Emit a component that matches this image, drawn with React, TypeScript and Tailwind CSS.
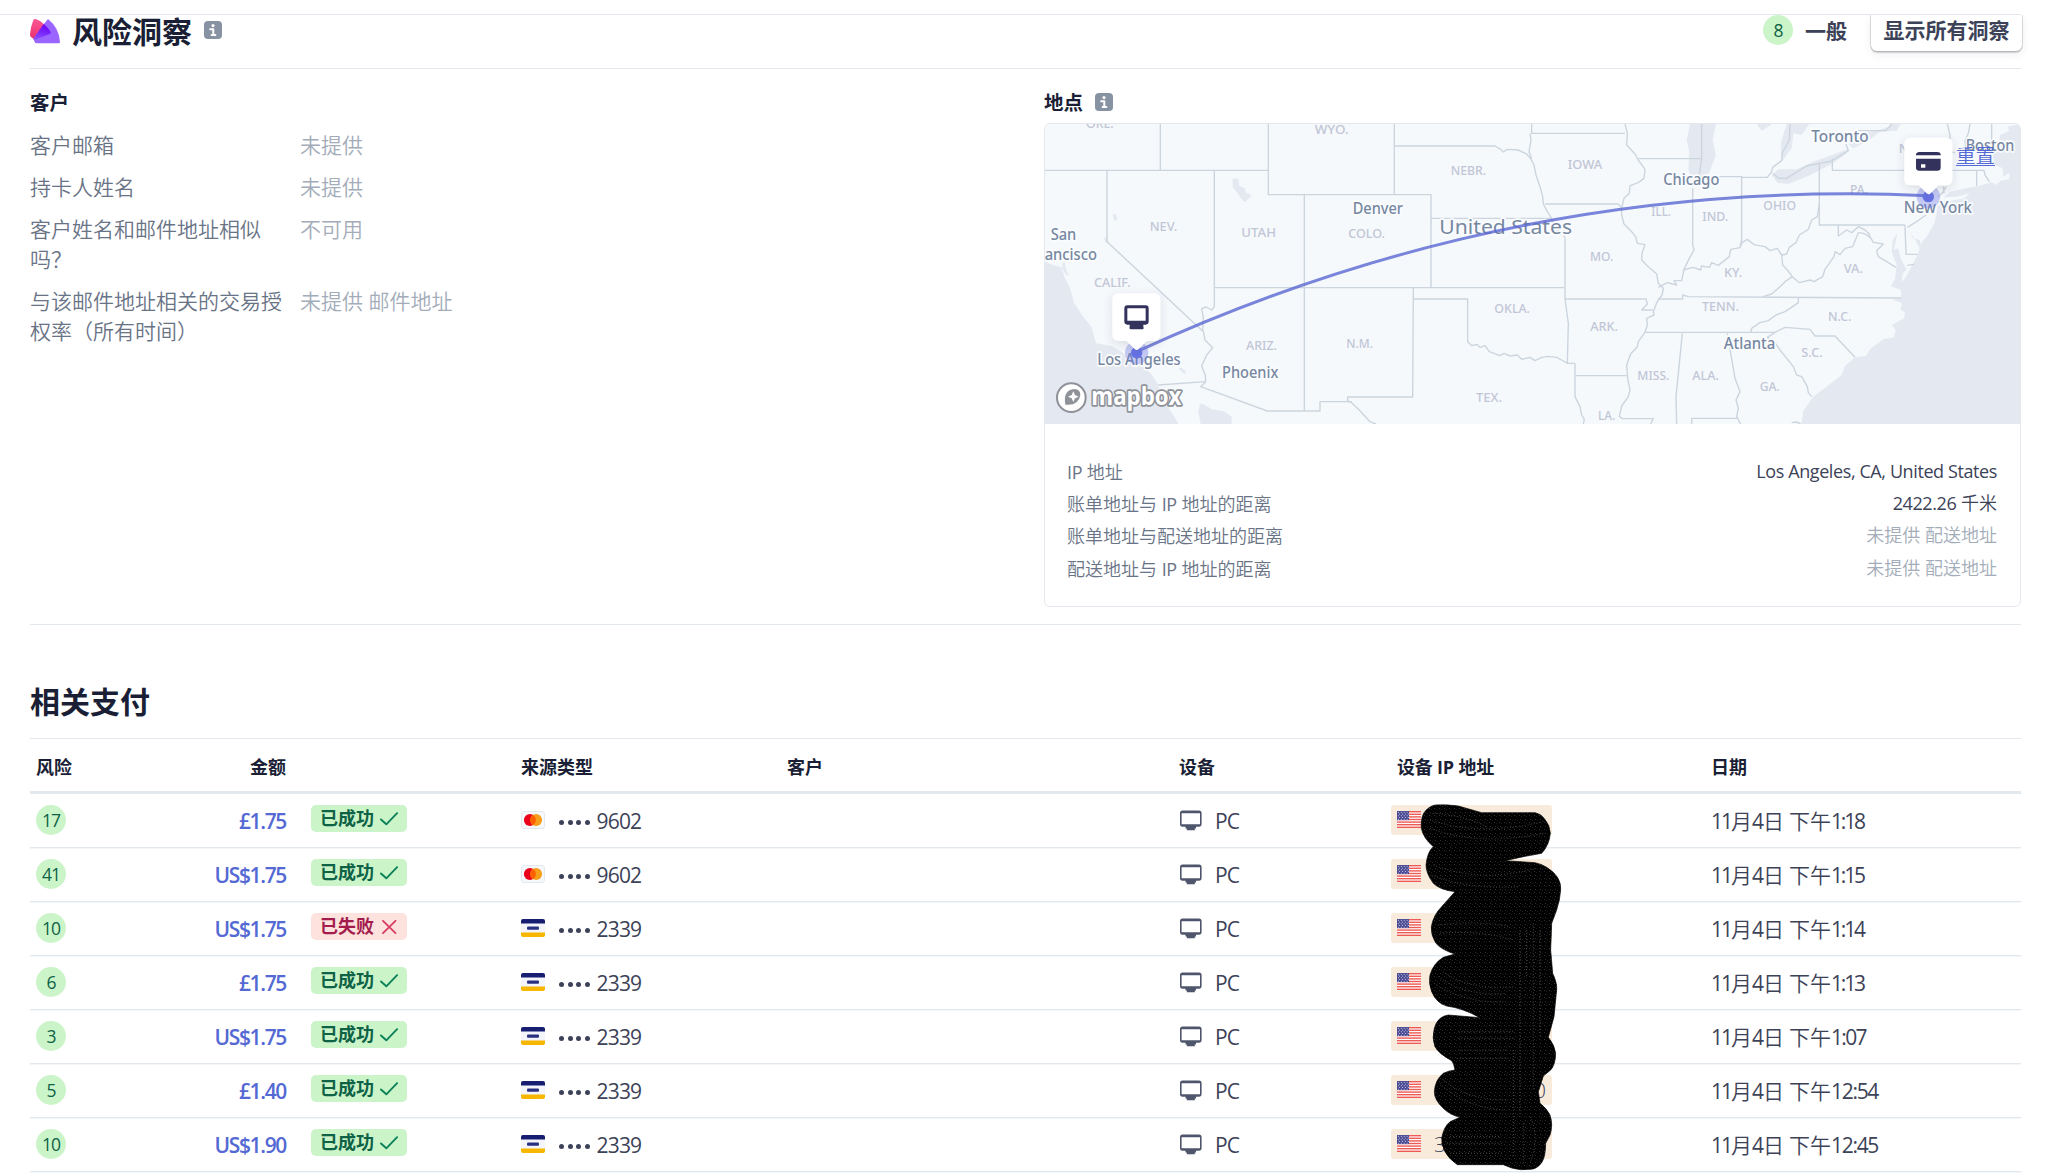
import React from 'react';

type Payment = {
  risk: number;
  amount: string;
  ok: boolean;
  brand: 'mc' | 'visa';
  last4: string;
  ip: string;
  time: string;
};

const payments: Payment[] = [
  { risk: 17, amount: '£1.75', ok: true, brand: 'mc', last4: '9602', ip: '', time: '1:18' },
  { risk: 41, amount: 'US$1.75', ok: true, brand: 'mc', last4: '9602', ip: '', time: '1:15' },
  { risk: 10, amount: 'US$1.75', ok: false, brand: 'visa', last4: '2339', ip: '', time: '1:14' },
  { risk: 6, amount: '£1.75', ok: true, brand: 'visa', last4: '2339', ip: '', time: '1:13' },
  { risk: 3, amount: 'US$1.75', ok: true, brand: 'visa', last4: '2339', ip: '', time: '1:07' },
  { risk: 5, amount: '£1.40', ok: true, brand: 'visa', last4: '2339', ip: '0', time: '12:54' },
  { risk: 10, amount: 'US$1.90', ok: true, brand: 'visa', last4: '2339', ip: '3', time: '12:45' },
];

const COLS =
  'grid grid-cols-[70px_186px_235px_266px_392px_212px_320px_310px] items-center';

/* Latin runs are set one step heavier than the Chinese text around them. */
function Mixed({ text }: { text: string }) {
  return (
    <>
      {text.split(/([A-Za-z0-9.,]+(?: [A-Za-z0-9.,]+)*)/).map((part, i) =>
        i % 2 ? (
          <span key={i} className="font-normal tracking-[-0.4px]">
            {part}
          </span>
        ) : (
          part
        ),
      )}
    </>
  );
}

function InfoIcon() {
  return (
    <svg width="18" height="18" viewBox="0 0 18 18" className="block shrink-0">
      <rect width="18" height="18" rx="4" fill="#8792a2" />
      <circle cx="9" cy="4.6" r="1.6" fill="#fff" />
      <path d="M6.2 8.3H9.3V13.6M7.6 14H11.4" stroke="#fff" strokeWidth="2" strokeLinecap="round" strokeLinejoin="round" fill="none" />
    </svg>
  );
}

function RadarLogo() {
  return (
    <svg width="30" height="26" viewBox="0 0 90 78" className="block shrink-0">
      <defs>
        <linearGradient id="pinkFade" x1="0" y1="0" x2="0" y2="1">
          <stop offset="0" stopColor="#ff5996" />
          <stop offset="1" stopColor="#e8306f" />
        </linearGradient>
        <linearGradient id="violetFade" x1="0.6" y1="0" x2="0.3" y2="1">
          <stop offset="0" stopColor="#6a00f4" />
          <stop offset="1" stopColor="#8a4dff" />
        </linearGradient>
      </defs>
      <path d="M54 3Q88 30 90 72Q90 76 86 76H20Q16 76 14 72L10 62L40 20Z" fill="#9b66ff" />
      <path d="M10 6Q12 2 17 3Q34 8 44 20L10 62L2 56Q0 53 0 48Q2 26 10 6Z" fill="url(#pinkFade)" />
      <path d="M41 18Q54 28 62 42Q64 46 59 48L12 66L10 62Z" fill="url(#violetFade)" />
    </svg>
  );
}

function MonitorIcon() {
  return (
    <svg width="24" height="21" viewBox="0 0 24 21" className="block shrink-0">
      <path
        fillRule="evenodd"
        d="M3.5 0.5H20Q22.6 0.5 22.6 3V14Q22.6 16.8 20 16.8H17V18.4H15.8V20.2H7.8V18.4H6.5V16.8H3.5Q1 16.8 1 14V3Q1 0.5 3.5 0.5ZM2.6 3.2V14.2H21V3.2Z"
        fill="#4f566b"
      />
    </svg>
  );
}

function CardBrand({ brand }: { brand: 'mc' | 'visa' }) {
  if (brand === 'mc') {
    return (
      <svg width="24" height="18" viewBox="0 0 24 18" className="block shrink-0">
        <rect x="0.5" y="0.5" width="23" height="17" rx="2.5" fill="#f6f9fc" stroke="#e3e8ee" />
        <circle cx="8.9" cy="9" r="6" fill="#eb001b" />
        <circle cx="15.1" cy="9" r="6" fill="#f79e1b" />
        <path d="M12 3.9a6 6 0 0 1 0 10.2a6 6 0 0 1 0-10.2Z" fill="#ff5f00" />
      </svg>
    );
  }
  return (
    <svg width="24" height="18" viewBox="0 0 24 18" className="block shrink-0">
      <rect width="24" height="18" rx="2" fill="#f3f5fa" />
      <path d="M2 0H22Q24 0 24 2V4.5H0V2Q0 0 2 0Z" fill="#171e71" />
      <path d="M0 13.5H24V16Q24 18 22 18H2Q0 18 0 16Z" fill="#f7b600" />
      <rect x="6" y="7.4" width="12" height="3.4" rx="1" fill="#2a3080" />
    </svg>
  );
}

const stars = [0, 1, 2, 3, 4].flatMap((r) =>
  [0, 1, 2, 3].map((c) => [1.4 + c * 2.9 + (r % 2 ? 1.2 : 0), 1.2 + r * 1.75]),
);

function Flag() {
  return (
    <svg width="24" height="18" viewBox="0 0 24 18" className="block shrink-0">
      <rect width="24" height="17" fill="#fff" />
      {[0, 1, 2, 3, 4, 5, 6].map((i) => (
        <rect key={i} y={i * 2.6} width="24" height="1.4" fill="#ee5a54" />
      ))}
      <rect width="12" height="9.1" fill="#4b4b94" />
      {stars.map(([x, y], i) => (
        <circle key={i} cx={x} cy={y} r="0.5" fill="#e6e6f5" />
      ))}
    </svg>
  );
}

function RiskBadge({ score }: { score: number }) {
  return (
    <span className="flex h-[30px] w-[30px] shrink-0 items-center justify-center rounded-full bg-[#cbf4c9] pt-px text-[17.5px] leading-none font-medium tracking-[-1px] text-[#0e6245]">
      {score}
    </span>
  );
}

function StatusBadge({ ok }: { ok: boolean }) {
  return (
    <span
      className={
        'flex h-[27px] w-[96px] items-center justify-between rounded-[5px] pr-[8px] pl-[9px] text-[18px] leading-[27px] font-bold ' +
        (ok ? 'bg-[#cbf4c9] text-[#0e6245]' : 'bg-[#fde2dd] text-[#a41c4e]')
      }
    >
      <span className="whitespace-nowrap">{ok ? '已成功' : '已失败'}</span>
      <svg width="19" height="14" viewBox="0 0 19 14" className="block shrink-0">
        {ok ? (
          <path d="M1 7.5L6.3 12.3L17.1 1.2" fill="none" stroke="#0d8259" strokeWidth="1.9" strokeLinecap="round" strokeLinejoin="round" />
        ) : (
          <path d="M3 0.8L15.5 13.2M15.5 0.8L3 13.2" fill="none" stroke="#d83c62" strokeWidth="1.8" strokeLinecap="round" />
        )}
      </svg>
    </span>
  );
}

/* Map geometry: three units per pixel. */
const westWater = [
  'M45 545L70 555L95 562L103 590L118 620L128 650L130 665L160 710L185 742L198 790L245 798L275 815L300 840L335 855L362 880L385 915L390 940L410 975L430 1005L445 1032H45Z',
  'M510 970L525 975L545 988L580 993L605 1010V1032H512L505 995Z',
  'M608 296L625 296L628 318L645 325L648 338L665 346L645 367L632 355L622 338L608 322Z',
  'M247 404L257 402L262 418L254 423Z',
  'M98 548L104 545L108 568L118 588L106 582L96 562Z',
  'M445 863L455 864L467 872L465 881L457 878Z',
  'M222 475L230 470L236 484L226 488Z',
];

const eastWater = [
  'M1470 132L1432 140L1438 152L1410 165L1407 190L1388 230L1395 255L1418 265L1420 290L1438 278V298L1412 302L1402 315L1385 307L1345 318L1300 326L1262 335L1240 352L1280 350L1320 340L1300 356L1235 366L1222 380L1220 400L1213 430L1190 470L1172 490L1165 520L1152 545L1128 590L1113 610V655L1085 660L1115 668L1112 690L1125 697L1122 715L1085 735L1097 750L1092 772L1060 778L1020 808L1008 828L975 832L945 858L935 885L900 912L850 950L820 992L814 1032H1470Z',
  'M1102 460L1088 480L1085 515L1100 555L1095 598L1082 618L1112 630L1118 580L1130 570L1112 535L1105 505L1092 510Z',
  'M1140 455L1148 475L1170 480L1172 510L1156 480Z',
  'M480 132H558L548 180L558 225L535 285L520 318L492 310L475 270L478 215L470 180Z',
  'M726 285L745 268L800 268L850 245L905 225L955 207L948 222L905 252L835 288L775 312L742 308Z',
  'M955 192L990 160L1040 152L1075 140L1085 132H1112L1100 152L1050 155L1015 182L970 205Z',
  'M770 132H838L815 165L790 160L785 205L755 245L752 190Z',
  'M680 132H726L708 145L695 152Z',
  'M1400 310L1415 305L1408 318Z',
  'M1425 325L1440 323L1436 330Z',
];

const westLines = [
  'M45 271H715M391 132V271M715 132V344H1203V623M553 271V680L545 690L528 681L515 686L520 712L518 752',
  'M231 271V485L520 755L525 780L548 803L530 825L515 858L526 885L527 905L512 920L712 993H870V965H965',
  'M385 915L527 905M553 623H1604M823 344V993M1093 132V344M1203 415H1565',
  'M1093 198H1395L1412 208L1420 216L1432 208L1465 210L1490 222L1502 236L1512 255L1518 285L1530 320L1538 350L1540 372L1552 395L1565 415L1575 445L1600 462L1605 475',
  'M1505 132V160H1785M1500 160L1503 182L1497 215L1505 236',
  'M1150 623L1148 951H953V963L965 968L990 992L1020 1025L1038 1032',
  'M1150 657H1313V785L1325 797L1340 793L1350 802L1365 797L1378 815L1410 827L1422 820L1440 828L1462 825L1475 838L1500 832L1515 842L1535 832L1555 829L1580 832L1600 843L1612 850H1635',
];

const eastLines = [
  'M45 372H265L276 384M105 475V657L115 730L112 850M135 850V950L150 980L155 1005L163 1018L160 1032',
  'M137 887H290M105 657H348L352 672L335 690H368',
  'M285 132L292 160L290 195L315 222L325 240L345 268L342 295L325 308L300 317L298 340L282 355L275 385V405L282 432L305 455L318 472L322 490L345 494L336 520L335 540L355 560L380 582L385 610L400 625L396 645L380 668L370 695L372 705L350 715L352 735L345 757L325 785L322 800L302 822L290 855L293 895L300 930L295 950L275 978L268 1010L278 1016H370L362 1032',
  'M325 236H515V132M515 236L507 290M488 325V495L492 510L478 535L462 568L455 602L432 602L440 615L412 608L385 622M540 290H635V480L630 500',
  'M635 292H712L725 275L728 262L755 242L757 218L778 180L780 132M728 280L745 294L768 296L830 258L868 250L905 243L955 212L948 192M868 250V435H1125M907 236V271H1340V318',
  'M868 372L862 410L845 420L835 448L808 465L798 488L778 502L770 522L755 525L742 505L720 512L705 500L672 494L652 478L636 488L630 503L602 508L598 530L575 548L565 556L545 548L538 562L515 558L512 570L490 562L460 570',
  'M755 525L758 555L772 570L787 590L765 605L748 622L725 642L700 650M787 590L808 608L840 600L852 605L878 590L885 568L912 530L915 515L930 524L945 505L968 500L985 458L1000 460L1020 470L1030 487L1060 492L1040 512L1045 530L1070 545L1098 562',
  'M925 435V468L950 450L965 458L985 440L1005 450L1018 462V475M1125 435L1128 523H1163M1132 442L1160 425L1192 402M1132 556L1152 553',
  'M383 657H458V645L475 650L1113 654M345 757H735L765 742L840 748L855 768H915L975 832',
  'M735 757L712 772L735 788L750 810L790 860L800 885L815 890L832 920L835 938L845 950M805 654V668L780 685L765 695L738 705L715 722L690 728L665 745L662 757',
  'M457 760L438 950L440 1032M592 760L615 895L630 935L618 960L625 985L620 1010L632 1032M620 1015H485V1032',
  'M1252 132L1260 165L1258 215L1275 218M1320 132L1315 160L1305 182L1308 215M1385 132V182M1340 271H1362L1365 285L1378 305M975 152H1068L1085 132',
  'M785 1028L800 1026L812 1032M1225 350L1240 335L1248 320M1240 320L1242 340',
];

const stateLabels: [string, number, number, number][] = [
  ['ORE.', 168, 145, 83], ['WYO.', 854, 161, 102], ['NEBR.', 1262, 285, 106], ['NEV.', 359, 454, 83],
  ['UTAH', 634, 471, 104], ['COLO.', 955, 475, 110], ['CALIF.', 192, 621, 110], ['ARIZ.', 648, 811, 93],
  ['N.M.', 949, 804, 80], ['OKLA.', 1393, 700, 107], ['TEX.', 1338, 966, 78], ['IOWA', 1613, 268, 104],
  ['ILL.', 1864, 408, 59], ['IND.', 2017, 424, 77], ['OHIO', 2200, 389, 98], ['PA.', 2460, 342, 54],
  ['MO.', 1680, 544, 70], ['KY.', 2082, 590, 55], ['VA.', 2441, 580, 58], ['TENN.', 2016, 694, 111],
  ['N.C.', 2394, 723, 70], ['ARK.', 1681, 754, 83], ['S.C.', 2314, 831, 64], ['MISS.', 1822, 899, 96],
  ['ALA.', 1987, 901, 80], ['GA.', 2189, 933, 60], ['LA.', 1704, 1021, 52], ['N.Y.', 2606, 219, 70],
];

const cityLabels: [string, number, number, number][] = [
  ['San', 62, 479, 77], ['ancisco', 44, 539, 157], ['Denver', 968, 402, 151], ['Los Angeles', 202, 854, 250],
  ['Phoenix', 576, 894, 169], ['Chicago', 1900, 316, 168], ['Toronto', 2344, 185, 172], ['New York', 2621, 399, 205],
  ['Boston', 2807, 214, 146], ['Atlanta', 2081, 807, 155],
];

function MapCanvas() {
  return (
    <svg width="975" height="300" viewBox="45 132 2925 900" className="block rounded-t-[5px]">
      <defs>
        <filter id="pinShadow" x="-40%" y="-40%" width="180%" height="180%">
          <feDropShadow dx="0" dy="8" stdDeviation="12" floodColor="#3c4257" floodOpacity="0.16" />
        </filter>
      </defs>
      <rect x="45" y="132" width="2925" height="900" fill="#f6f9fc" />
      <g fill="#e4e9f1">
        {westWater.map((d, i) => (
          <path key={i} d={d} />
        ))}
        <g transform="translate(1500 0)">
          {eastWater.map((d, i) => (
            <path key={i} d={d} />
          ))}
        </g>
      </g>
      <g fill="none" stroke="#ccd5de" strokeWidth="4.2" strokeLinejoin="round">
        {westLines.map((d, i) => (
          <path key={i} d={d} />
        ))}
        <g transform="translate(1500 0)">
          {eastLines.map((d, i) => (
            <path key={i} d={d} />
          ))}
        </g>
      </g>
      <g fontFamily="'Noto Sans', sans-serif">
        <g fontSize="39" fontWeight="500" fill="#c1c6d6" stroke="#f6f9fc" strokeWidth="5" style={{ paintOrder: 'stroke' }}>
          {stateLabels.map(([t, x, y, w]) => (
            <text key={t} x={x} y={y} textLength={w} lengthAdjust="spacingAndGlyphs">
              {t}
            </text>
          ))}
        </g>
        <g fontWeight="500" fill="#7688a1" stroke="#fbfcfe" strokeWidth="10" strokeLinejoin="round" style={{ paintOrder: 'stroke' }}>
          <g fontSize="48">
            {cityLabels.map(([t, x, y, w]) => (
              <text key={t} x={x} y={y} textLength={w} lengthAdjust="spacingAndGlyphs">
                {t}
              </text>
            ))}
          </g>
          <text x="1228" y="461" fontSize="62" fontWeight="400" textLength="398" lengthAdjust="spacingAndGlyphs">
            United States
          </text>
        </g>
      </g>
      <path d="M320 815Q1458 291 2695 347" fill="none" stroke="#5a67d2" strokeOpacity="0.8" strokeWidth="9" />
      <g fill="#6772e5">
        <circle cx="320" cy="818" r="35" fillOpacity="0.35" />
        <circle cx="320" cy="818" r="17" />
        <circle cx="2695" cy="350" r="35" fillOpacity="0.35" />
        <circle cx="2695" cy="350" r="17" />
      </g>
      <g filter="url(#pinShadow)" fill="#fff">
        <path d="M267 640H372Q391 640 391 660V763Q391 782 372 783H350L326 807Q320 813 314 807L290 783H267Q247 782 247 763V660Q247 640 267 640Z" />
        <path d="M2643 173H2748Q2767 173 2767 193V296Q2767 315 2748 316H2726L2702 340Q2696 346 2690 340L2666 316H2643Q2623 315 2623 296V193Q2623 173 2643 173Z" />
      </g>
      <path
        fillRule="evenodd"
        d="M292 676H347Q356 676 356 686V724Q356 734 347 734H340V740Q344 748 334 748H306Q296 748 299 740V734H292Q283 734 283 724V686Q283 676 292 676ZM292 685V722H347V685Z"
        fill="#32325d"
      />
      <path
        fillRule="evenodd"
        d="M2658 226V222Q2660 216 2668 216H2722Q2731 216 2732 222V226ZM2658 236H2732V263Q2732 272 2722 272H2668Q2658 272 2658 263ZM2673 253V263H2686V253Z"
        fill="#32325d"
      />
      <g>
        <circle cx="124" cy="953" r="43" fill="#fff" stroke="#8f9299" strokeWidth="6" />
        <path d="M106 974Q98 930 133 927Q152 928 151 946Q146 978 106 974ZM130 934L135 945L146 950L135 955L130 966L125 955L114 950L125 945Z" fillRule="evenodd" fill="#8f9299" />
        <text x="184" y="974" fontFamily="'Open Sans', sans-serif" fontWeight="700" fontSize="76" textLength="270" lengthAdjust="spacingAndGlyphs" fill="#fff" stroke="#8f9299" strokeWidth="11" strokeLinejoin="round" style={{ paintOrder: 'stroke' }}>
          mapbox
        </text>
      </g>
    </svg>
  );
}

function Scribble() {
  const d =
    'M165 45Q200 43 235 48L305 68L465 68Q485 72 493 86Q510 105 511 130Q508 165 485 190L430 200L375 212L465 218Q485 222 500 232Q545 260 542 300Q540 330 530 360L515 400L512 480L518 550Q532 580 530 600L522 680L505 742Q524 765 527 790Q526 825 512 840L490 858L475 905L480 940Q500 955 510 975Q520 1005 510 1035L497 1060Q497 1100 485 1118Q470 1138 450 1138Q420 1142 395 1134L370 1124H232Q205 1105 195 1085Q182 1060 186 1040Q192 1010 210 995L240 982Q210 975 190 955Q163 930 163 905Q165 870 190 850Q205 842 225 840Q222 820 215 812Q175 790 165 770Q155 745 163 715Q172 680 205 675L300 683Q250 655 200 648Q170 640 155 605Q145 580 150 555Q160 520 190 502L225 492Q185 480 168 460Q152 435 154 410Q160 375 185 350L225 305Q180 300 160 280Q138 250 138 225Q142 185 160 170Q130 145 124 115Q122 85 132 68Q145 50 165 45Z';
  return (
    <svg width="200" height="383" viewBox="0 0 600 1149" className="block">
      <defs>
        <pattern id="grain" width="15" height="21" patternUnits="userSpaceOnUse">
          <rect x="0" y="3" width="3" height="3" fill="#303030" />
          <rect x="6" y="6" width="3" height="3" fill="#1c1c1c" />
          <rect x="12" y="12" width="3" height="3" fill="#343434" />
          <rect x="3" y="15" width="3" height="3" fill="#1a1a1a" />
        </pattern>
      </defs>
      <path d={d} fill="#000" stroke="#000" strokeWidth="2" strokeLinejoin="round" />
      <path d={d} fill="url(#grain)" />
      <g fill="none" stroke="#5c5c5c" strokeWidth="2.4" strokeDasharray="3 6">
        <path d="M150 90Q300 140 490 95M150 115Q300 170 490 130M160 70Q250 75 320 110M160 225Q300 280 470 235M155 255Q260 300 420 290M180 430Q300 420 400 450M175 405Q290 390 390 410M175 560Q250 620 380 610M170 585Q260 640 370 635M190 545Q260 600 400 590M235 725H400M235 745H400M235 780H385M230 805H385M180 880Q250 950 370 960M190 870Q260 930 380 930M200 1060H370M210 1090H370M210 1040H360" />
        <path d="M420 420V980M440 420V560M460 400V900M480 420V740M400 780V1100M430 1000V1120M450 980Q480 1040 450 1120" />
      </g>
    </svg>
  );
}

const customerRows: [string[], string][] = [
  [['客户邮箱'], '未提供'],
  [['持卡人姓名'], '未提供'],
  [['客户姓名和邮件地址相似', '吗？'], '不可用'],
  [['与该邮件地址相关的交易授', '权率（所有时间）'], '未提供 邮件地址'],
];

const distanceRows: [string, string, boolean][] = [
  ['IP 地址', 'Los Angeles, CA, United States', true],
  ['账单地址与 IP 地址的距离', '2422.26 千米', true],
  ['账单地址与配送地址的距离', '未提供 配送地址', false],
  ['配送地址与 IP 地址的距离', '未提供 配送地址', false],
];

function timeTracking(time: string) {
  if (time.length > 4) return 'font-normal tracking-[-1.3px]';
  return time === '1:07' ? 'font-normal tracking-[-1.7px]' : 'font-normal tracking-[-2.2px]';
}

export default function App() {
  return (
    <div className="h-[1175px] w-[2052px] overflow-hidden bg-white font-['Open_Sans','Noto_Sans_CJK_SC',sans-serif] text-[#3c4257]">
      <div className="h-[14px]" />
      <div className="w-[2021px] border-t border-[#e3e8ee]" />
      <div className="mr-[31px] ml-[30px]">
        <header className="flex h-[53px] items-start justify-between">
          <div className="flex items-start">
            <div className="mt-[3px]">
              <RadarLogo />
            </div>
            <h1 className="-mt-[6px] ml-[12px] text-[30px] leading-[46px] font-bold whitespace-nowrap text-[#1a1f36]">风险洞察</h1>
            <div className="mt-[6px] ml-[12px]">
              <InfoIcon />
            </div>
          </div>
          <div className="-mr-px flex items-start">
            <RiskBadge score={8} />
            <span className="ml-[12px] text-[21px] leading-[32px] font-bold whitespace-nowrap">一般</span>
            <button className="ml-[24px] h-[36px] w-[151px] rounded-b-[6px] text-[21px] leading-[30px] font-bold whitespace-nowrap shadow-[0_0_0_1px_rgba(60,66,87,0.16),0_2px_1px_rgba(0,0,0,0.14),0_3px_8px_rgba(60,66,87,0.1)] [clip-path:inset(0_-8px_-14px_-8px)]">
              <span className="relative -top-[3px]">显示所有洞察</span>
            </button>
          </div>
        </header>

        <section className="flex h-[557px] border-y border-[#e3e8ee]">
          <div className="w-[1014px] pt-[19px]">
            <h2 className="text-[19.5px] leading-[30px] font-bold text-[#1a1f36]">客户</h2>
            <dl className="mt-[12px] flex flex-col gap-[12px] text-[21px] leading-[30px] font-[350]">
              {customerRows.map(([label, value]) => (
                <div key={label[0]} className="flex">
                  <dt className="w-[270px] text-[#697386]">
                    {label.map((line) => (
                      <span key={line} className="block whitespace-nowrap">
                        {line}
                      </span>
                    ))}
                  </dt>
                  <dd className="whitespace-nowrap text-[#a3acb9]">{value}</dd>
                </div>
              ))}
            </dl>
          </div>
          <div className="w-[977px]">
            <div className="flex h-[54px] items-end pb-[5px]">
              <h2 className="mr-[12px] text-[19.5px] leading-[30px] font-bold text-[#1a1f36]">地点</h2>
              <div className="mb-[7px]">
                <InfoIcon />
              </div>
            </div>
            <div className="relative h-[484px] rounded-[6px] border border-[#e3e8ee]">
              <MapCanvas />
              <a className="absolute top-[17px] left-[911px] text-[19.5px] leading-[30px] font-[350] text-[#5469d4] underline decoration-1 underline-offset-2">
                重置
              </a>
              <dl className="flex flex-col px-[23px] pt-[32px] text-[18px] leading-[32.2px] font-[350]">
                {distanceRows.map(([label, value, known]) => (
                  <div key={label} className="-ml-px flex justify-between">
                    <dt className="text-[#697386]">
                      <Mixed text={label} />
                    </dt>
                    <dd className={known ? 'relative -top-px text-[#3c4257]' : 'relative -top-px text-[#a3acb9]'}>
                      <Mixed text={value} />
                    </dd>
                  </div>
                ))}
              </dl>
            </div>
          </div>
        </section>

        <section className="relative">
          <h1 className="flex h-[113px] items-end pb-[13px] text-[30px] leading-[46px] font-bold text-[#1a1f36]">相关支付</h1>
          <div className={COLS + ' h-[56px] border-t border-b-[3px] border-[#e3e8ee] pt-[4px] text-[18px] font-bold text-[#1a1f36]'}>
            <div className="pl-[6px]">风险</div>
            <div className="text-right">金额</div>
            <div />
            <div>来源类型</div>
            <div>客户</div>
            <div>设备</div>
            <div className="pl-[6px] tracking-[-0.2px]">设备 IP 地址</div>
            <div>日期</div>
          </div>
          {payments.map((p, i) => (
            <div
              key={i}
              className={COLS + ' h-[54px] border-b border-[#e3e8ee] pb-[2px] text-[21px] leading-[30px] font-[350] shadow-[0_1px_0_#f3f6f9]'}
            >
              <div className="pt-px pl-[6px]">
                <RiskBadge score={p.risk} />
              </div>
              <div className="pt-[3px] text-right font-semibold tracking-[-1.35px] text-[#5469d4]">{p.amount}</div>
              <div className="pb-[2px] pl-[25px]">
                <StatusBadge ok={p.ok} />
              </div>
              <div className="flex items-center">
                <CardBrand brand={p.brand} />
                <span className="mt-[5px] ml-[14px] flex gap-[3.5px]">
                  {[0, 1, 2, 3].map((n) => (
                    <i key={n} className="h-[5px] w-[5px] rounded-full bg-[#3c4257]" />
                  ))}
                </span>
                <span className="ml-[7px] pt-[3px] font-normal tracking-[-0.8px]">{p.last4}</span>
              </div>
              <div />
              <div className="flex items-center pt-px">
                <MonitorIcon />
                <span className="ml-[12px] pt-[2px] font-normal tracking-[-0.9px]">PC</span>
              </div>
              <div className="pt-px">
                <div className="flex h-[30px] w-[161px] items-center rounded-[3px] bg-[#f8ebdb] px-[6px]">
                  <Flag />
                  <span className={p.ip === '0' ? 'ml-auto' : 'ml-[13px]'}>{p.ip}</span>
                </div>
              </div>
              <div className="pt-[3px] whitespace-nowrap">
                <span className="font-normal tracking-[-2px]">11</span>月
                <span className="font-normal tracking-[-1px]">4</span>日
                <span className="ml-[5px]">下午</span>
                <span className={timeTracking(p.time)}>{p.time}</span>
              </div>
            </div>
          ))}
          <div className="pointer-events-none absolute top-[165px] left-[1350px]">
            <Scribble />
          </div>
        </section>
      </div>
    </div>
  );
}
